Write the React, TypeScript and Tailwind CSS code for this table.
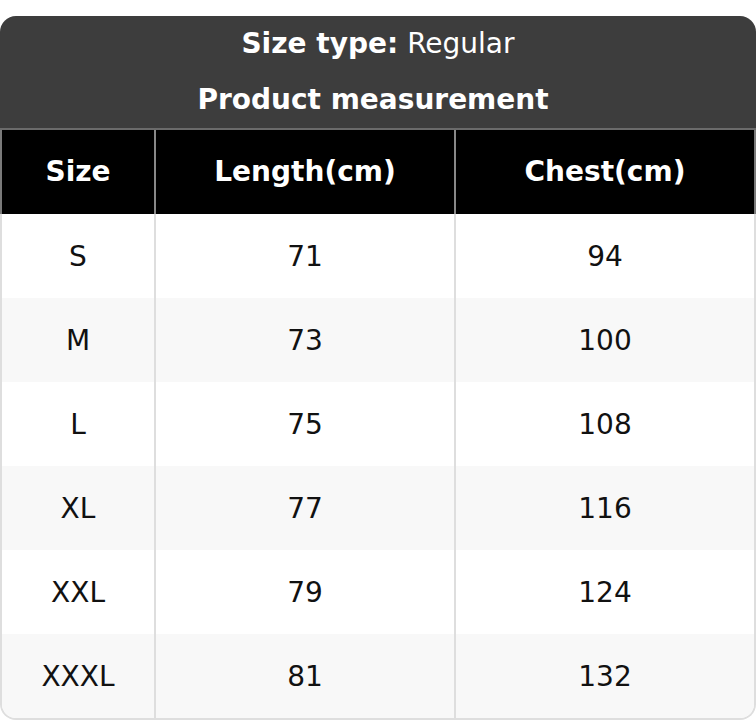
import React from "react";

const rows = [
  ["S", "71", "94"],
  ["M", "73", "100"],
  ["L", "75", "108"],
  ["XL", "77", "116"],
  ["XXL", "79", "124"],
  ["XXXL", "81", "132"],
];

export default function App() {
  return (
    <div className="w-[756px] h-[720px] bg-white pt-4 font-['DejaVu_Sans',sans-serif] text-[28px]">
      <div className="w-[756px]">
        <div className="bg-[#3d3d3d] rounded-t-[16px] text-white text-center border-b-2 border-[#6b6b6b]">
          <div className="h-[56px] flex items-center justify-center">
            <span className="font-bold">Size type:</span>
            <span className="ml-[9px]">Regular</span>
          </div>
          <div className="h-[56px] flex items-center justify-center font-bold pr-[10px]">
            Product measurement
          </div>
        </div>
        <div className="flex h-[84px] bg-black text-white font-bold border-x-2 border-[#7a7a7a]">
          <div className="w-[152px] flex items-center justify-center">Size</div>
          <div className="w-[300px] border-l-2 border-[#888] flex items-center justify-center">Length(cm)</div>
          <div className="flex-1 border-l-2 border-[#888] flex items-center justify-center">Chest(cm)</div>
        </div>
        <div className="border-x-2 border-b-2 border-[#dedede] rounded-b-[16px] overflow-hidden text-[#111]">
          {rows.map((r, i) => (
            <div key={r[0]} className={`flex h-[84px] ${i % 2 === 1 ? "bg-[#f8f8f8]" : "bg-white"}`}>
              <div className="w-[152px] pt-[2px] flex items-center justify-center">{r[0]}</div>
              <div className="w-[300px] pt-[2px] border-l-2 border-[#dedede] flex items-center justify-center">{r[1]}</div>
              <div className="flex-1 pt-[2px] border-l-2 border-[#dedede] flex items-center justify-center">{r[2]}</div>
            </div>
          ))}
        </div>
      </div>
    </div>
  );
}
